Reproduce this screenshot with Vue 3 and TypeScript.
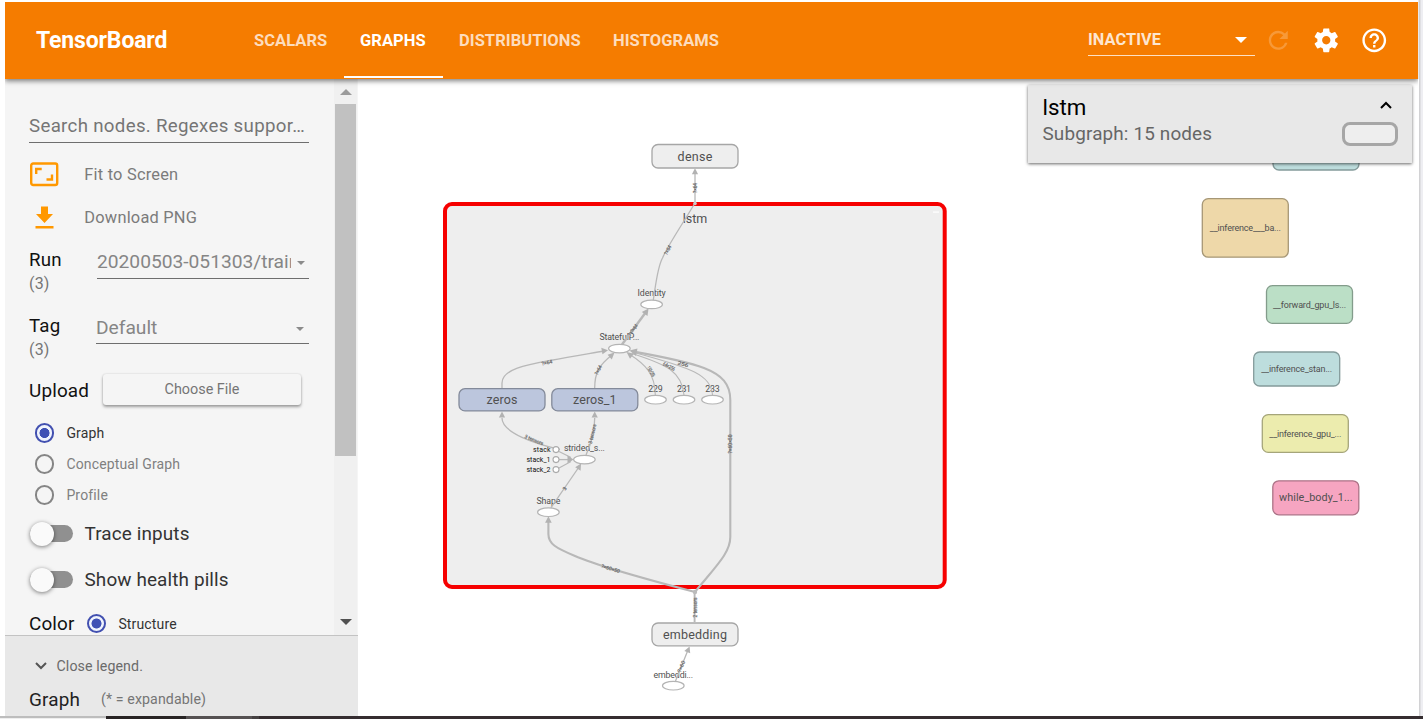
<script setup lang="ts">
interface Box { x: number; y: number; w: number; h: number; fill: string; stroke: string; label: string; size: number; tw: number }
interface Op { x: number; y: number; label: string; tw: number }
interface Edge { d: string; w: number; head: string }
interface Tag { x: number; y: number; r: number; t: string; w: number }

const tabs: string[] = ['SCALARS', 'GRAPHS', 'DISTRIBUTIONS', 'HISTOGRAMS']
const modes: string[] = ['Graph', 'Conceptual Graph', 'Profile']
const toggles: string[] = ['Trace inputs', 'Show health pills']

const boxes: Box[] = [
  { x: 652, y: 144.5, w: 86, h: 23.5, fill: '#eeeeee', stroke: '#a6a6a6', label: 'dense', size: 12.5, tw: 35 },
  { x: 652, y: 623, w: 86, h: 22.8, fill: '#eeeeee', stroke: '#a6a6a6', label: 'embedding', size: 12.5, tw: 64 },
  { x: 459, y: 388.7, w: 86, h: 22.2, fill: '#bcc6dd', stroke: '#838a9a', label: 'zeros', size: 12.5, tw: 31 },
  { x: 551.8, y: 388.7, w: 86, h: 22.2, fill: '#bcc6dd', stroke: '#838a9a', label: 'zeros_1', size: 12.5, tw: 43.5 },
  { x: 1273, y: 136, w: 86, h: 34, fill: '#bddddd', stroke: '#849b9b', label: '', size: 9, tw: 10 },
  { x: 1202.3, y: 198.6, w: 86, h: 58.6, fill: '#eed8a9', stroke: '#a69776', label: '__inference___ba...', size: 9, tw: 71 },
  { x: 1266.5, y: 285.6, w: 86, h: 37.8, fill: '#bbdfc6', stroke: '#839c8b', label: '__forward_gpu_ls...', size: 9, tw: 73 },
  { x: 1253.7, y: 352, w: 86, h: 34, fill: '#bddddd', stroke: '#849b9b', label: '__inference_stan...', size: 9, tw: 71 },
  { x: 1262.3, y: 414.6, w: 86, h: 37.8, fill: '#ececae', stroke: '#a5a57a', label: '__inference_gpu_...', size: 9, tw: 72 },
  { x: 1272.8, y: 480.8, w: 86, h: 34, fill: '#f6a5c1', stroke: '#ac7387', label: 'while_body_1...', size: 10.8, tw: 73.5 },
]

const ops: Op[] = [
  { x: 651.6, y: 304.4, label: 'Identity', tw: 28 },
  { x: 619.4, y: 348.6, label: 'StatefulP...', tw: 40 },
  { x: 655.5, y: 399.7, label: '229', tw: 14.5 },
  { x: 684, y: 399.7, label: '231', tw: 14 },
  { x: 712.5, y: 399.7, label: '233', tw: 14.5 },
  { x: 584.4, y: 459.6, label: 'strided_s...', tw: 41 },
  { x: 548.4, y: 512.2, label: 'Shape', tw: 24 },
  { x: 673.3, y: 685.7, label: 'embeddi...', tw: 39.5 },
]

const stacks: { y: number; label: string; tw: number }[] = [
  { y: 449.6, label: 'stack', tw: 17.5 },
  { y: 459.6, label: 'stack_1', tw: 24 },
  { y: 469.6, label: 'stack_2', tw: 24 },
]

const edges: Edge[] = [
  { d: 'M695 203V171', w: 1.3, head: '695,168.2 691.9,174.200 698.1,174.200' },
  { d: 'M653.3 300C656 283 657.5 267 662.5 258C667 247 680 228 695 203', w: 1.3, head: '' },
  { d: 'M622 344.5L646 312', w: 2.4, head: '648.5,308.5 641.8,312 647.5,316' },
  { d: 'M502 388V383C502 369 528 364.5 550 360.5C572 356 590 353.5 604 351', w: 1.3, head: '608,350.3 601.3,347.8 602.5,354.2' },
  { d: 'M594.7 388C594.7 373 599 365 612 355', w: 1.3, head: '614.5,352.5 607.6,354.8 611.8,359.4' },
  { d: 'M655.3 395C655.3 374 645 364 629 354', w: 1.1, head: '626.5,352 630,358.800 634,353.8' },
  { d: 'M684 395C682 372 668 365 632 353.5', w: 1.1, head: '' },
  { d: 'M712.5 395C711 375 692 368 634 352.5', w: 1.1, head: '' },
  { d: 'M695 592C716 566 730.3 553 730.3 537V400C730.3 384 722 375 704 368C686 361 658 356 633 351.5', w: 2.1, head: '629.5,350.5 637.5,348.5 636,355.9' },
  { d: 'M560 449.5C536 444 502 433 502 418', w: 1.3, head: '502,411.5 498.9,417.500 505.1,417.500' },
  { d: 'M586 455C591 444 594.7 433 594.7 418', w: 1.3, head: '594.7,411.5 591.6,417.500 597.8,417.500' },
  { d: 'M559 451.5L571 457.5', w: 1.1, head: '' },
  { d: 'M559 459.6H570', w: 1.3, head: '573.5,459.6 567.5,455.6 567.5,463.6' },
  { d: 'M559 468L571 461.5', w: 1.1, head: '' },
  { d: 'M551 507.7L579 467', w: 1.3, head: '581,463.6 575.2,467.2 580.6,470.8' },
  { d: 'M695 592C653 581 598 566 575 556C556 548 548.4 544 548.4 534V521', w: 2.1, head: '548.4,516.2 545.1,522.8 551.7,522.8' },
  { d: 'M694.6 622V592', w: 1.9, head: '' },
  { d: 'M675.5 681L688 650', w: 1.3, head: '689.6,646.5 684.3,651 690.2,653.3' },
]

const tags: Tag[] = [
  { x: 695, y: 188, r: -90, t: '?×64', w: 10 },
  { x: 668, y: 250, r: -62, t: '?×64', w: 10 },
  { x: 633, y: 330, r: -54, t: '?×?×64', w: 13 },
  { x: 547, y: 362.8, r: -12, t: '?×64', w: 11 },
  { x: 598.5, y: 370, r: -62, t: '?×64', w: 10 },
  { x: 651, y: 371.5, r: 60, t: '192×256', w: 11 },
  { x: 669, y: 366.5, r: 27, t: '64×256', w: 13 },
  { x: 683, y: 364.2, r: 17, t: '256', w: 11 },
  { x: 730.3, y: 444, r: -90, t: '?×60×50', w: 19 },
  { x: 534, y: 440, r: 22, t: '3 tensors', w: 20 },
  { x: 592.5, y: 434, r: -77, t: '3 tensors', w: 20 },
  { x: 564.7, y: 488.5, r: -55, t: '3', w: 3 },
  { x: 610.5, y: 568.8, r: 17, t: '?×60×50', w: 19 },
  { x: 695.3, y: 607.5, r: -90, t: '2 tensors', w: 20 },
  { x: 681.5, y: 666.5, r: -66, t: '?×60', w: 12 },
]
</script>

<template>
  <div class="shell">
    <div class="app">
      <header class="bar">
        <div class="brand">TensorBoard</div>
        <nav class="tabs">
          <div v-for="t in tabs" :key="t" class="tab" :class="[t.toLowerCase(), { on: t === 'GRAPHS' }]"><span>{{ t }}</span></div>
        </nav>
        <div class="inactive">
          <span>INACTIVE</span>
          <svg width="12" height="6" viewBox="0 0 12 6"><path d="M0 0h12L6 6z" fill="#fff" /></svg>
        </div>
        <svg class="ico refresh" viewBox="0 0 24 24"><path fill="#fff" d="M17.65 6.35A7.958 7.958 0 0 0 12 4c-4.42 0-7.99 3.58-7.99 8s3.57 8 7.99 8c3.73 0 6.84-2.55 7.73-6h-2.08A5.99 5.99 0 0 1 12 18c-3.31 0-6-2.69-6-6s2.69-6 6-6c1.66 0 3.14.69 4.22 1.78L13 11h7V4l-2.35 2.35z" /></svg>
        <svg class="ico" viewBox="0 0 24 24"><path fill="#fff" d="M19.43 12.98c.04-.32.07-.64.07-.98s-.03-.66-.07-.98l2.11-1.65c.19-.15.24-.42.12-.64l-2-3.46c-.12-.22-.39-.3-.61-.22l-2.49 1c-.52-.4-1.08-.73-1.69-.98l-.38-2.65A.488.488 0 0 0 14 2h-4c-.25 0-.46.18-.49.42l-.38 2.65c-.61.25-1.17.59-1.69.98l-2.49-1c-.23-.09-.49 0-.61.22l-2 3.46c-.13.22-.07.49.12.64l2.11 1.65c-.04.32-.07.65-.07.98s.03.66.07.98l-2.11 1.65c-.19.15-.24.42-.12.64l2 3.46c.12.22.39.3.61.22l2.49-1c.52.4 1.08.73 1.69.98l.38 2.65c.03.24.24.42.49.42h4c.25 0 .46-.18.49-.42l.38-2.65c.61-.25 1.17-.59 1.69-.98l2.49 1c.23.09.49 0 .61-.22l2-3.46c.12-.22.07-.49-.12-.64l-2.11-1.65zM12 15.5c-1.93 0-3.5-1.57-3.5-3.5s1.57-3.5 3.5-3.5 3.5 1.57 3.5 3.5-1.57 3.5-3.5 3.5z" /></svg>
        <svg class="ico" viewBox="0 0 24 24"><path fill="#fff" d="M11 18h2v-2h-2v2zm1-16C6.48 2 2 6.48 2 12s4.48 10 10 10 10-4.48 10-10S17.52 2 12 2zm0 18c-4.41 0-8-3.59-8-8s3.59-8 8-8 8 3.59 8 8-3.59 8-8 8zm0-14c-2.21 0-4 1.79-4 4h2c0-1.1.9-2 2-2s2 .9 2 2c0 2-3 1.75-3 5h2c0-2.25 3-2.5 3-5 0-2.21-1.79-4-4-4z" /></svg>
      </header>

      <div class="body">
        <aside class="side">
          <div class="scroll">
            <div class="controls">
              <div class="search"><span>Search nodes. Regexes suppor…</span></div>
              <div class="action">
                <svg class="fit" width="30" height="25" viewBox="0 0 30 25">
                  <rect x="2.200" y="1.500" width="26" height="21.500" rx="2" fill="none" stroke="#ff9800" stroke-width="2.400" />
                  <path d="M7.200 12V7h5.500M23 12.500v5h-5.500" fill="none" stroke="#ff9800" stroke-width="2.400" />
                </svg>
                <span>Fit to Screen</span>
              </div>
              <div class="action dl">
                <svg class="fit" width="30" height="24" viewBox="0 0 30 24"><path fill="#ff9800" d="M12 .5h7v7.500h5L15.500 17 7 8h5zM6.500 20h18v2.500h-18z" /></svg>
                <span>Download PNG</span>
              </div>
              <div class="field">
                <div class="lab">Run<small>(3)</small></div>
                <div class="select run"><div class="val">20200503-051303/train</div><i></i></div>
              </div>
              <div class="field">
                <div class="lab">Tag<small>(3)</small></div>
                <div class="select tagsel"><div class="val">Default</div><i></i></div>
              </div>
              <div class="upload"><span>Upload</span><button>Choose File</button></div>
              <div v-for="(m, i) in modes" :key="m" class="radio" :class="{ on: i === 0 }"><b></b><span>{{ m }}</span></div>
              <div v-for="t in toggles" :key="t" class="toggle"><div class="track"><i></i></div><span>{{ t }}</span></div>
              <div class="color"><span class="name">Color</span><div class="radio on"><b></b><span>Structure</span></div></div>
            </div>
            <div class="rail">
              <svg width="12" height="6" viewBox="0 0 12 6"><path d="M0 6h12L6 0z" fill="#9b9b9b" /></svg>
              <div class="thumb"></div>
              <svg class="down" width="12" height="6" viewBox="0 0 12 6"><path d="M0 0h12L6 6z" fill="#505050" /></svg>
            </div>
          </div>
          <div class="legend">
            <div class="close"><svg width="12" height="8" viewBox="0 0 12 8"><path d="M1 1l5 5 5-5" fill="none" stroke="#555" stroke-width="2" /></svg><span>Close legend.</span></div>
            <div class="glab"><span>Graph</span><small>(* = expandable)</small></div>
          </div>
        </aside>

        <main class="canvas">
          <svg width="1061" height="637" viewBox="358 79 1061 637">
            <rect x="445" y="204" width="499.700" height="383" rx="7" fill="#eeeeee" stroke="#f60000" stroke-width="4" />
            <rect x="933" y="211.500" width="6" height="1.200" fill="#fff" />
            <g v-for="b in boxes" :key="b.x + '-' + b.y">
              <rect :x="b.x" :y="b.y" :width="b.w" :height="b.h" rx="6" :fill="b.fill" :stroke="b.stroke" stroke-width="1.300" />
              <text v-if="b.label" class="t" :x="b.x + b.w / 2" :y="b.y + b.h / 2 + b.size * 0.34" :font-size="b.size" :textLength="b.tw" text-anchor="middle">{{ b.label }}</text>
            </g>
            <text class="t" x="695" y="223" font-size="12.500" textLength="24.500" text-anchor="middle">lstm</text>
            <text v-for="o in ops" :key="o.label" class="t" :x="o.x" :y="o.y - 8.2" font-size="8.800" :textLength="o.tw" text-anchor="middle">{{ o.label }}</text>
            <g v-for="(e, i) in edges" :key="i">
              <path :d="e.d" fill="none" stroke="#b8b8b8" :stroke-width="e.w" />
              <polygon v-if="e.head" :points="e.head" fill="#b2b2b2" />
            </g>
            <circle cx="695" cy="592" r="2.200" fill="#bbb" />
            <circle cx="695" cy="203.500" r="1.800" fill="#ccc" />
            <text v-for="(g, i) in tags" :key="i" class="edge" :transform="`translate(${g.x} ${g.y}) rotate(${g.r})`" y="1.600" :textLength="g.w" lengthAdjust="spacingAndGlyphs" text-anchor="middle">{{ g.t }}</text>
            <ellipse v-for="o in ops" :key="o.label + 'e'" :cx="o.x" :cy="o.y" rx="10.800" ry="4.300" fill="#fff" stroke="#b4b4b4" stroke-width="1.200" />
            <g v-for="s in stacks" :key="s.label">
              <circle cx="556" :cy="s.y" r="3" fill="#fff" stroke="#ababab" stroke-width="1.100" />
              <text class="stack" x="550.500" :y="s.y + 2.3" :textLength="s.tw" text-anchor="end">{{ s.label }}</text>
            </g>
          </svg>
          <section class="info">
            <div><h2>lstm</h2><p>Subgraph: 15 nodes</p></div>
            <div class="right">
              <svg width="12" height="8" viewBox="0 0 12 8"><path d="M1 7l5-5 5 5" fill="none" stroke="#000" stroke-width="2" /></svg>
              <div class="pill"></div>
            </div>
          </section>
        </main>
      </div>
    </div>
    <footer class="strip"><i class="a"></i><i class="b"></i><i class="c"></i><i class="d"></i><i class="e"></i></footer>
  </div>
</template>

<style>
body { margin: 0; background: #fff; overflow: hidden; }
</style>

<style scoped>
.shell { box-sizing: border-box; width: 1423px; height: 719px; padding: 2px 0 0 5px; font-family: Roboto, "Liberation Sans", sans-serif; display: flex; flex-direction: column; overflow: hidden; background: linear-gradient(90deg, #fff 1418px, #d2d2d4 1419px, #d2d2d4 1420px, #eeeef2 1421px); }
.app { width: 1413px; height: 714px; display: flex; flex-direction: column; flex: none; }
.bar { position: relative; z-index: 3; box-sizing: border-box; height: 77px; flex: none; background: #f57c00; box-shadow: 0 2px 5px rgba(0,0,0,.5); display: flex; align-items: center; color: #fff; clip-path: inset(0 0 -12px 0); }
.brand { width: 216px; flex: none; padding-left: 31px; font-size: 23px; font-weight: 700; letter-spacing: -.15px; white-space: nowrap; }
.tabs { display: flex; height: 77px; width: 805px; flex: none; }
.tab { box-sizing: border-box; padding: 2px 0 0 16px; display: flex; align-items: center; font-size: 16.500px; font-weight: 700; letter-spacing: .05px; color: #fddcbd; border-bottom: 2px solid transparent; height: 76px; white-space: nowrap; }
.tab.scalars { width: 108px; margin-left: -16px; padding-left: 18px; }
.tab.graphs { width: 99px; }
.tab.distributions { width: 154px; }
.tab.on { color: #fff; border-color: #fff; }
.inactive { box-sizing: border-box; width: 167px; height: 31px; border-bottom: 1.500px solid #fde0c4; display: flex; align-items: center; justify-content: space-between; padding: 0 8px 0 0; font-size: 16.300px; letter-spacing: .1px; font-weight: 700; color: #fde6d0; margin: 0 9px 0 31px; flex: none; }
.inactive span { margin-top: -2px; }
.ico { width: 28.500px; height: 28.500px; flex: none; margin-right: 19.500px; margin-left: -.5px; }
.ico + .ico { margin-left: 0; }
.refresh { opacity: .22; }
.body { display: flex; height: 637px; }
.side { width: 353px; flex: none; background: #f5f5f5; display: flex; flex-direction: column; height: 637px; }
.scroll { height: 556px; display: flex; overflow: hidden; flex: none; }
.controls { box-sizing: border-box; width: 329px; padding-left: 24px; flex: none; }
.search { box-sizing: border-box; width: 280px; height: 64px; border-bottom: 1px solid #6e6e6e; font-size: 18.700px; color: #757575; line-height: 94px; letter-spacing: .31px; white-space: nowrap; margin-bottom: 10px; }
.action { height: 43px; display: flex; align-items: center; font-size: 16.400px; letter-spacing: .22px; color: #7b7b7b; }
.action span { margin-left: 25.300px; }
.fit { flex: none; }
.field { height: 66px; display: flex; width: 280px; justify-content: space-between; }
.dl { margin-bottom: -1px; }
.lab { font-size: 18.700px; line-height: 22px; padding-top: 11px; color: #111; letter-spacing: .2px; }
.lab small { display: block; font-size: 16px; line-height: 24px; color: #757575; padding-top: 1px; }
.select { box-sizing: border-box; width: 212px; height: 41px; border-bottom: 1px solid #6e6e6e; padding-top: 13px; line-height: 22px; font-size: 19.200px; color: #858585; display: flex; }
.tagsel { width: 213px; height: 40px; }
.val { width: 194px; overflow: hidden; white-space: nowrap; }
.tagsel .val { width: 196px; }
.run .val { margin-right: 1px; }
.select i { margin: 10px 0 0 5px; width: 0; height: 0; border: 4px solid transparent; border-top-color: #8b8b8b; border-bottom: 0; }
.tagsel i { margin-left: 4px; }
.upload { height: 40px; display: flex; align-items: center; font-size: 18.900px; letter-spacing: .15px; color: #111; }
.upload span { width: 74px; margin-top: 1px; }
.upload button { width: 198px; height: 31px; padding: 0; border: 0; border-radius: 3px; background: #f5f5f5; box-shadow: 0 2px 3px rgba(0,0,0,.35), 0 0 2px rgba(0,0,0,.15); font: 400 14.400px Roboto, sans-serif; color: #757575; margin-top: -1px; }
.radio { height: 31px; display: flex; align-items: center; font-size: 14px; letter-spacing: .15px; color: #808080; padding-left: 5.500px; }
.upload + .radio { margin-top: 7.500px; }
.radio b { box-sizing: border-box; width: 19.500px; height: 19.500px; border: 2px solid #858585; border-radius: 50%; margin-right: 12.400px; }
.radio.on { color: #333; }
.radio.on b { border-color: #4250b0; background: radial-gradient(circle, #3f51b5 4.700px, #f0f4fd 5.300px); }
.toggle { height: 46px; display: flex; align-items: center; font-size: 18.900px; letter-spacing: .13px; color: #333; }
.track { width: 43px; height: 17px; border-radius: 9px; background: #909090; margin: 0 11.500px 0 1px; display: flex; align-items: center; }
.track i { width: 24px; height: 24px; border-radius: 50%; background: #fafafa; box-shadow: 0 1px 4px rgba(0,0,0,.5); }
.color { height: 42px; display: flex; align-items: center; font-size: 18.900px; letter-spacing: .15px; color: #111; }
.name { width: 52px; }
.rail { width: 23px; background: #f0f0f0; display: flex; flex-direction: column; align-items: center; padding-top: 10px; box-sizing: border-box; }
.thumb { width: 21px; height: 352px; background: #c1c1c1; margin-top: 9px; }
.down { margin-top: 163px; flex: none; }
.legend { box-sizing: border-box; height: 81px; border-top: 1px solid #c3c3c3; background: #e8e8e8; padding-left: 24px; }
.close { height: 18px; margin-top: 21px; display: flex; align-items: center; font-size: 14.200px; letter-spacing: .1px; color: #6b6b6b; padding-left: 6px; }
.close span { margin-left: 9.500px; }
.glab { height: 24px; margin-top: 12px; display: flex; align-items: center; font-size: 18.900px; letter-spacing: .15px; color: #222; }
.glab span { width: 72px; }
.glab small { font-size: 14.200px; letter-spacing: .1px; color: #757575; }
.canvas { position: relative; width: 1061px; height: 637px; background: #fff; }
.canvas > svg { display: block; }
.t { fill: #505050; }
.edge { font-size: 5px; fill: #555; stroke: #777; stroke-width: .2px; }
.stack { font-size: 7px; fill: #111; }
.info { position: absolute; box-sizing: border-box; left: 670px; top: 6px; width: 384px; height: 78px; background: #e8e8e8; box-shadow: 0 1px 3px rgba(0,0,0,.6); display: flex; justify-content: space-between; padding: 9px 14px 0 14.500px; }
.info h2 { margin: 0; font-size: 22.300px; font-weight: 400; line-height: 26px; color: #000; }
.info p { margin: 2px 0 0; font-size: 18.900px; letter-spacing: .15px; line-height: 24px; color: #666; }
.right { display: flex; flex-direction: column; align-items: flex-end; padding-top: 7px; }
.right svg { margin-right: 6px; flex: none; }
.pill { box-sizing: border-box; width: 56px; height: 24px; border: 3px solid #a6a6a6; border-radius: 8px; background: #eee; margin-top: 13px; }
.strip { height: 3px; flex: none; margin-left: -5px; display: flex; }
.a { width: 106px; background: linear-gradient(#bdbdbd 50%, #eee 50%); }
.b { width: 80px; background: #272324; }
.c { width: 66px; background: #555152; }
.d { width: 7px; background: #454142; }
.e { flex: 1; background: #352d30; }
</style>
